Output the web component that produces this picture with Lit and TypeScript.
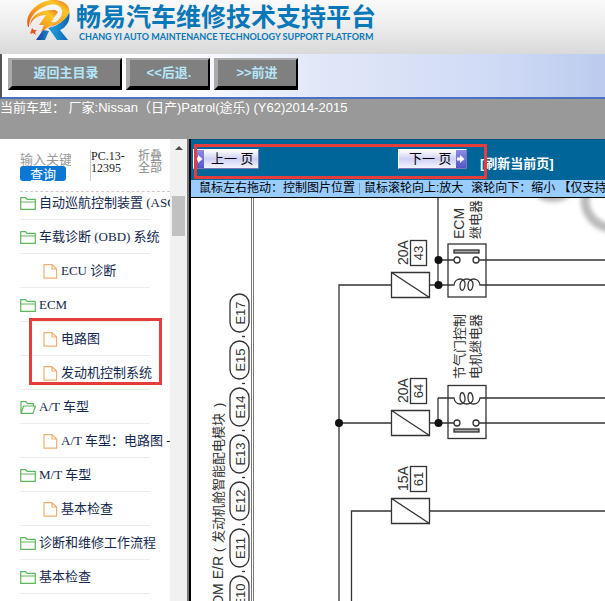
import { LitElement, html, css, svg } from "lit";
import { customElement } from "lit/decorators.js";
import { classMap } from "lit/directives/class-map.js";

type TreeNode = {
  label: string;
  open?: boolean;
  marked?: boolean;
  children?: string[];
};

const TREE: TreeNode[] = [
  { label: "自动巡航控制装置 (ASCD)" },
  { label: "车载诊断 (OBD) 系统", children: ["ECU 诊断"] },
  { label: "ECM", marked: true, children: ["电路图", "发动机控制系统"] },
  { label: "A/T 车型", open: true, children: ["A/T 车型：电路图 - "] },
  { label: "M/T 车型", children: ["基本检查"] },
  { label: "诊断和维修工作流程" },
  { label: "基本检查" },
];

@customElement("brand-header")
class BrandHeader extends LitElement {
  static styles = css`
    :host {
      display: flex;
      gap: 6px;
      height: 54px;
      padding-left: 26px;
      box-sizing: border-box;
      background: linear-gradient(#fafafa, #ececec 50%, #d9d9d9);
      overflow: hidden;
      flex: none;
    }
    .logo {
      width: 44px;
      height: 42px;
      flex: none;
    }
    .names {
      color: #0878b8;
      white-space: nowrap;
    }
    .title {
      margin: 0;
      font: bold 25px/30px "Noto Sans CJK SC", sans-serif;
    }
    .sub {
      margin: 0 0 0 3px;
      font: bold 9px/13px Lato, sans-serif;
    }
  `;

  render() {
    return html`
      <svg class="logo" viewBox="0 0 44 42" aria-hidden="true">
        <defs>
          <linearGradient id="flame" x1="0" y1="1" x2="1" y2="0">
            <stop offset="0" stop-color="#e8501c" />
            <stop offset="0.45" stop-color="#f9a51c" />
            <stop offset="0.75" stop-color="#fbc62a" />
            <stop offset="1" stop-color="#ee6a1e" />
          </linearGradient>
          <linearGradient id="leg" x1="0" y1="0" x2="1" y2="0">
            <stop offset="0" stop-color="#1a3f9c" />
            <stop offset="0.5" stop-color="#1e9ad8" />
            <stop offset="1" stop-color="#0c62b0" />
          </linearGradient>
        </defs>
        <path fill="url(#leg)" d="M10 40 L17 30 L23 31 L19 40 Z M22 28 C33 26 39 20 43 11 C45 20 41 27 34 30 L42 40 H31 L24 30 Z" />
        <path fill="url(#flame)" d="M2 27 C-2 15 10 2 25 0 C38 -1 45 6 43 13 C41 19 33 25 23 27 C31 22 37 17 36 11 C35 5 28 3 20 6 C9 10 3 18 3 27 Z" />
        <path fill="url(#flame)" d="M4 26 C4 15 15 9 29 10 L32 12 L25 22 L30 22 L15 32 L18 25 L13 25 L20 15 C12 15 6 19 4 26 Z" />
        <path fill="#e8551c" d="M6 28 L8 30 L11 30 L9 32 L10 35 L7 33 L4 34 L5 31 Z" />
      </svg>
      <div class="names">
        <h1 class="title">畅易汽车维修技术支持平台</h1>
        <p class="sub">CHANG YI AUTO MAINTENANCE TECHNOLOGY SUPPORT PLATFORM</p>
      </div>
    `;
  }
}

@customElement("side-tree")
class SideTree extends LitElement {
  static styles = css`
    :host {
      display: flex;
      width: 189px;
      box-sizing: border-box;
      border-right: 2px solid #777;
      flex: none;
      background: #fff;
      overflow: hidden;
      font: 13px/22px "Liberation Serif", "Noto Sans CJK SC", serif;
    }
    .content {
      flex: 1;
      min-width: 0;
      overflow: hidden;
      padding-left: 20px;
    }
    .tools {
      display: flex;
      height: 53px;
      padding-top: 11px;
      box-sizing: border-box;
      border-bottom: 1px dashed #d5c9c5;
      font-size: 12px;
      line-height: 12px;
    }
    .search {
      width: 70px;
      display: flex;
      flex-direction: column;
      align-items: flex-start;
    }
    .keyword {
      width: 51px;
      height: 17px;
      padding: 0;
      border: 0;
      outline: 0;
      background: none;
      font: 13px/17px "Noto Sans CJK SC", sans-serif;
    }
    .keyword::placeholder {
      color: #999;
    }
    .find {
      width: 46px;
      height: 15px;
      padding: 0;
      border: 0;
      border-radius: 3px;
      background: #0a78d4;
      color: #fff;
      font: 13px/15px "Noto Sans CJK SC", sans-serif;
      margin-top: -1px;
    }
    .code {
      width: 47px;
      height: 31px;
      border-left: 1px solid #ccc;
      color: #222;
    }
    .fold {
      color: #888;
      text-decoration: none;
    }
    ul {
      list-style: none;
      margin: 0;
      padding: 0;
      display: flex;
      flex-direction: column;
      gap: 6px;
    }
    .children {
      margin-top: 6px;
      position: relative;
    }
    .marked::after {
      content: "";
      position: absolute;
      left: 9px;
      top: -10px;
      bottom: 5px;
      width: 133px;
      box-sizing: border-box;
      border: 3px solid #e53c3c;
    }
    .row {
      display: flex;
      align-items: center;
      gap: 3px;
      width: 130px;
      height: 28px;
      box-sizing: border-box;
      padding-bottom: 5px;
      border-bottom: 1px solid #ebebeb;
      color: #14284e;
      text-decoration: none;
      white-space: nowrap;
    }
    .leaf {
      padding-left: 23px;
    }
    .icon {
      flex: none;
      fill: none;
    }
    .scroll {
      width: 17px;
      flex: none;
      background: #f1f1f1;
      display: flex;
      flex-direction: column;
      align-items: center;
    }
    .up {
      border: 4px solid transparent;
      border-top: 0;
      border-bottom-color: #505050;
      margin: 7px 0 46px;
    }
    .thumb {
      width: 13px;
      height: 40px;
      background: #c1c1c1;
    }
  `;

  folder(open?: boolean) {
    return html`<svg class="icon" width="16" height="16" viewBox="0 0 16 16" stroke="#5cb85c" stroke-width="1.2" stroke-linejoin="round">
      ${open
        ? svg`<path d="M1 14.4 V2.6 H6 L7.4 4.6 H13.4 V7 M1 14.4 L3.6 7 H15.4 L13 14.4 Z" />`
        : svg`<path d="M0.7 14.4 V2.6 H5.6 L7 4.4 H15.3 V14.4 Z M0.7 7 H15.3" />`}
    </svg>`;
  }

  leaf(label: string) {
    return html`<li>
      <a class="row leaf" href="#">
        <svg class="icon" width="15" height="16" viewBox="0 0 15 16" stroke="#f0b070" stroke-width="1.2" stroke-linejoin="round">
          <path d="M1 1.6 H9 L13.6 6 V15.2 H1 Z M9 1.6 V6 H13.6" />
        </svg>
        <span>${label}</span>
      </a>
    </li>`;
  }

  render() {
    return html`
      <div class="content">
        <div class="tools">
          <form class="search" @submit=${(e: Event) => e.preventDefault()}>
            <input class="keyword" aria-label="输入关键字" placeholder="输入关键字" />
            <button class="find">查询</button>
          </form>
          <div class="code">PC.13-<br />12395</div>
          <a class="fold" href="#">折叠<br />全部</a>
        </div>
        <ul>
          ${TREE.map(
            (n) => html`<li>
              <a class="row" href="#">${this.folder(n.open)}<span>${n.label}</span></a>
              ${n.children
                ? html`<ul class=${classMap({ children: true, marked: !!n.marked })}>
                    ${n.children.map((c) => this.leaf(c))}
                  </ul>`
                : ""}
            </li>`
          )}
        </ul>
      </div>
      <div class="scroll"><div class="up"></div><div class="thumb"></div></div>
    `;
  }
}

@customElement("wiring-diagram")
class WiringDiagram extends LitElement {
  static styles = css`
    :host {
      display: block;
      flex: 1;
      min-height: 0;
      overflow: hidden;
      background: #fff;
    }
    .sheet {
      display: block;
      width: 100%;
      height: 100%;
      font-family: "Liberation Sans", "Noto Sans CJK SC", sans-serif;
    }
    .wire {
      fill: none;
      stroke: #333;
      stroke-width: 1.3;
    }
    .bar {
      fill: #aaa;
    }
    .frame {
      fill: none;
      stroke: #777;
      stroke-width: 1;
    }
    .dot {
      fill: #111;
    }
    .t13 {
      font-size: 13px;
      fill: #333;
    }
    .t14 {
      font-size: 14px;
      fill: #333;
    }
    .shade {
      filter: blur(2px);
    }
  `;

  // Text that reads upwards, starting at its lower end.
  up(x: number, y: number, text: string, cls = "t13", anchor = "start") {
    return svg`<text class=${cls} text-anchor=${anchor} transform="translate(${x} ${y}) rotate(-90)">${text}</text>`;
  }

  fuse(y: number, amps: string, slot: string) {
    return svg`
      <path class="wire" d="M391.5 ${y - 12.5} h38 v25 h-38 Z l38 25" />
      <rect class="wire" x="410.5" y=${y - 44.5} width="16" height="25" />
      ${this.up(408, y - 20, amps, "t14")}
      ${this.up(423, y - 32, slot, "t13", "middle")}
    `;
  }

  relay(top: number, contact: number, k: number, bar: number, s: number) {
    return svg`
      <rect class="wire" x="448" y=${top} width="38" height="53" />
      <rect class="wire bar" x="454" y=${bar} width="25" height="3" />
      <path class="wire" d="M438 ${contact} H454 M479 ${contact} H2000" />
      <circle class="wire" cx="457" cy=${contact} r="3" />
      <circle class="wire" cx="476" cy=${contact} r="3" />
      <path class="wire" d="M438 ${k} H454 C455 ${k - 8 * s} 466 ${k - 8 * s} 465 ${k} C464 ${k + 7 * s} 460 ${k + 7 * s} 460 ${k} C460 ${k - 8 * s} 474 ${k - 8 * s} 473 ${k} C472 ${k + 7 * s} 468 ${k + 7 * s} 468 ${k} C468 ${k - 8 * s} 479 ${k - 8 * s} 480 ${k} H2000" />
    `;
  }

  render() {
    const plugs = ["E17", "E15", "E14", "E13", "E12", "E11", "E10"];
    return html`
      <svg class="sheet" role="img" aria-label="电路图">
        <g transform="translate(-191 -198)">
          <g class="shade">
            <ellipse cx="553" cy="195" rx="16" ry="7" fill="#bbb" />
            <circle cx="613" cy="200" r="28" fill="none" stroke="#bbb" stroke-width="9" />
          </g>
          <path class="frame" d="M251.5 198 V2000 M253.5 198 V2000" />
          <path class="wire" d="M391 285 H339 V2000 M339 423 H391 M391 511 H351.5 V2000 M430 511 H2000 M430 285 H438 V198 M430 423 H438 V398" />
          ${this.fuse(285, "20A", "43")} ${this.fuse(423, "20A", "64")} ${this.fuse(511, "15A", "61")}
          ${this.relay(244, 260, 285, 250, 1)} ${this.relay(385.5, 423, 398, 429, -1)}
          <circle class="dot" cx="438.5" cy="260" r="4" />
          <circle class="dot" cx="438.5" cy="285" r="4" />
          <circle class="dot" cx="438.5" cy="423" r="4" />
          <circle class="dot" cx="339" cy="423" r="4" />
          ${this.up(464, 239, "ECM", "t14")} ${this.up(480, 239, "继电器")}
          ${this.up(464, 379, "节气门控制")} ${this.up(480, 379, "电机继电器")}
          ${this.up(223, 556, "IPDM E/R", "t14", "end")} ${this.up(223, 552, "(")}
          ${this.up(223, 543, "发动机舱智能配电模块")} ${this.up(223, 407, ")")}
          ${plugs.map((p, i) => {
            const y = 294 + i * 47;
            return svg`
              <rect class="wire" x="230" y=${y} width="19" height="38" rx="9.5" />
              ${this.up(245, y + 19, p, "t13", "middle")}
              <path class="wire" d="M242 ${y + 42.5} h3" />
            `;
          })}
        </g>
      </svg>
    `;
  }
}

@customElement("viewer-pane")
class ViewerPane extends LitElement {
  static styles = css`
    :host {
      flex: 1;
      min-width: 0;
      display: flex;
      flex-direction: column;
      border-left: 2px solid #000;
      font: 12px/17px "Liberation Sans", "Noto Sans CJK SC", sans-serif;
    }
    .bar {
      position: relative;
      display: flex;
      flex: none;
      height: 41px;
      box-sizing: border-box;
      padding: 9px 0 0 2px;
      background: #006699;
      border-top: 1px solid #00557f;
      white-space: nowrap;
      overflow: hidden;
    }
    .page {
      display: flex;
      height: 20px;
      padding: 0;
      border: 1px solid #fff;
      border-right-color: #7878b8;
      border-bottom-color: #7878b8;
      background: linear-gradient(#fff, #cfcff5 50%, #f4f4ff);
      font: 13px/18px "Liberation Sans", "Noto Sans CJK SC", sans-serif;
      color: #000;
      flex: none;
    }
    .prev {
      width: 66px;
      gap: 7px;
      margin-right: 139px;
    }
    .next {
      width: 69px;
      gap: 4px;
      padding-left: 10px;
    }
    .arrow {
      width: 10px;
      height: 18px;
      background: linear-gradient(#8c8ce8, #5555c8);
      fill: #fff;
      flex: none;
    }
    .refresh {
      margin: 5px 0 0 13px;
      color: #fff;
      font-size: 13px;
      font-weight: bold;
      text-decoration: none;
      line-height: 20px;
    }
    .outline {
      position: absolute;
      left: 3px;
      top: 4px;
      width: 293px;
      height: 35px;
      box-sizing: border-box;
      border: 3px solid #e53c3c;
    }
    .hint {
      flex: none;
      height: 18px;
      box-sizing: border-box;
      display: flex;
      gap: 3px;
      margin: 0;
      padding-left: 8px;
      background: #99ccff;
      border-bottom: 1px solid #000;
      color: #000;
      white-space: nowrap;
      overflow: hidden;
    }
    .sep {
      width: 1px;
      height: 12px;
      margin: 3px 1px;
      background: #7098c8;
      flex: none;
    }
    .down {
      margin-left: 5px;
    }
  `;

  render() {
    return html`
      <div class="bar">
        <button class="page prev">
          <svg class="arrow" viewBox="0 0 10 18"><path d="M1 7.5 H4 V5 L8.5 9 L4 13 V10.5 H1 Z" /></svg>
          <span>上一 页</span>
        </button>
        <button class="page next">
          <span>下一 页</span>
          <svg class="arrow" viewBox="0 0 10 18"><path d="M1 7.5 H4 V5 L8.5 9 L4 13 V10.5 H1 Z" /></svg>
        </button>
        <a class="refresh" href="#">[刷新当前页]</a>
        <div class="outline"></div>
      </div>
      <p class="hint">
        <span>鼠标左右拖动：控制图片位置</span>
        <span class="sep"></span>
        <span>鼠标滚轮向上:放大</span>
        <span class="down">滚轮向下：缩小</span>
        <span>【仅支持IE浏览器】</span>
      </p>
      <wiring-diagram></wiring-diagram>
    `;
  }
}

@customElement("app-root")
class AppRoot extends LitElement {
  static styles = css`
    :host {
      display: flex;
      flex-direction: column;
      height: 100vh;
      overflow: hidden;
      background: #fff;
    }
    .nav {
      display: flex;
      flex: none;
      gap: 4px;
      height: 45px;
      box-sizing: border-box;
      padding: 4px 6px;
      border-left: 2px solid #555;
      border-bottom: 2px solid #4a70c0;
      background: linear-gradient(90deg, #fff, #fbfcff 30%, #e2e8f8 52%, #cfdaf5 82%, #bccbee);
    }
    .btn {
      height: 32px;
      box-sizing: border-box;
      padding: 0;
      border: solid;
      border-width: 2px 2px 4px 4px;
      border-color: #aaa #000 #000 #aaa;
      background: #808080;
      color: #b4e6fa;
      font: bold 13px/24px "Liberation Sans", "Noto Sans CJK SC", sans-serif;
      width: 84px;
      flex: none;
    }
    .home {
      width: 114px;
    }
    .car {
      flex: none;
      margin: 0;
      height: 40px;
      background: #999;
      color: #fff;
      font: 13px/17px "Liberation Sans", "Noto Sans CJK SC", sans-serif;
      white-space: pre;
      overflow: hidden;
    }
    .main {
      display: flex;
      flex: 1;
      min-height: 0;
    }
  `;

  render() {
    return html`
      <brand-header></brand-header>
      <nav class="nav">
        <button class="btn home">返回主目录</button>
        <button class="btn">&lt;&lt;后退.</button>
        <button class="btn">&gt;&gt;前进</button>
      </nav>
      <p class="car">当前车型： 厂家:Nissan（日产)Patrol(途乐) (Y62)2014-2015</p>
      <main class="main">
        <side-tree></side-tree>
        <viewer-pane></viewer-pane>
      </main>
    `;
  }
}
